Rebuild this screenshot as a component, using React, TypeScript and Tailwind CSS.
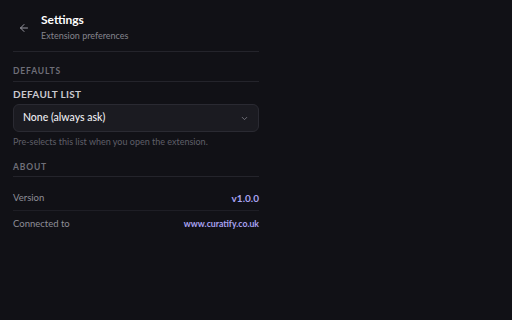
import { ArrowLeft, ChevronDown } from "lucide-react";

export default function App() {
  return (
    <div className="min-h-screen w-full bg-[#111116] font-['Lato','Noto_Sans',sans-serif] text-[#e6e6ea]">
      <div className="w-[272px] px-[13px]">
        <header className="flex items-center gap-[6px] border-b border-[#24242b] pb-[8px] pt-[12px]">
          <button className="flex h-[22px] w-[22px] items-center justify-center text-[#9a9aa3]">
            <ArrowLeft size={12} strokeWidth={2} />
          </button>
          <div className="flex flex-col">
            <h1 className="text-[12px] font-bold leading-[16px] text-white">Settings</h1>
            <p className="text-[9px] leading-[15px] text-[#84848d]">Extension preferences</p>
          </div>
        </header>

        <section className="pt-[13px]">
          <h2 className="border-b border-[#24242b] pb-[4px] text-[8.5px] font-bold uppercase tracking-[0.1em] leading-[12px] text-[#6f6f78]">
            Defaults
          </h2>
          <div className="pt-[5px]">
            <label className="block text-[10px] font-bold uppercase tracking-[0.03em] leading-[14px] text-[#c9c9cf]">
              Default list
            </label>
            <div className="mt-[3px] flex h-[28px] items-center justify-between rounded-[6px] border border-[#2a2a32] bg-[#1b1b21] pl-[9px] pr-[9px]">
              <span className="text-[10.5px] font-medium text-[#eeeef2]">None (always ask)</span>
              <ChevronDown size={9} strokeWidth={2} className="text-[#8a8a93]" />
            </div>
            <p className="mt-[3px] text-[9px] leading-[13px] text-[#5f5f68]">
              Pre-selects this list when you open the extension.
            </p>
          </div>
        </section>

        <section className="pt-[13px]">
          <h2 className="border-b border-[#24242b] pb-[3px] text-[8.5px] font-bold uppercase tracking-[0.1em] leading-[12px] text-[#6f6f78]">
            About
          </h2>
          <div className="flex items-center justify-between border-b border-[#1e1e25] pb-[5px] pt-[14px]">
            <span className="text-[9.5px] leading-[14px] text-[#8e8e97]">Version</span>
            <span className="text-[10px] font-bold leading-[14px] text-[#a9a3f2]">v1.0.0</span>
          </div>
          <div className="flex items-center justify-between py-[6px]">
            <span className="text-[9.5px] leading-[14px] text-[#8e8e97]">Connected to</span>
            <span className="text-[8.7px] font-bold leading-[14px] text-[#a9a3f2]">www.curatify.co.uk</span>
          </div>
        </section>
      </div>
    </div>
  );
}
